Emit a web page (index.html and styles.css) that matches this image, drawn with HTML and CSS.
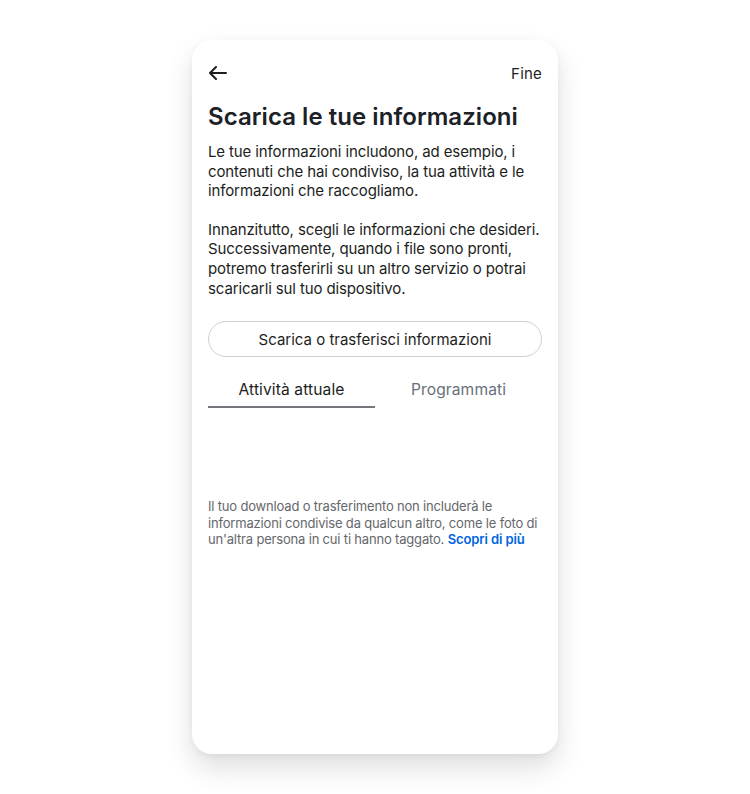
FILE: index.html
```html
<!DOCTYPE html>
<html lang="it">
<head>
    <meta charset="UTF-8">
    <meta name="viewport" content="width=device-width, initial-scale=1.0">
    <title>Scarica le tue informazioni</title>
    <link rel="stylesheet" href="styles.css">
</head>
<body>
    <div class="phone">
        <div class="topbar">
            <span class="back">
                <svg width="18" height="14" viewBox="0 0 18 14" fill="none" stroke="#1c1e21" stroke-width="2" stroke-linecap="round" stroke-linejoin="round">
                    <path d="M17 7H1.5M7 1L1 7l6 6"/>
                </svg>
            </span>
            <span class="done">Fine</span>
        </div>

        <div class="content">
            <h1>Scarica le tue informazioni</h1>
            <p>Le tue informazioni includono, ad esempio, i contenuti che hai condiviso, la tua attività e le informazioni che raccogliamo.</p>
            <p>Innanzitutto, scegli le informazioni che desideri. Successivamente, quando i file sono pronti, potremo trasferirli su un altro servizio o potrai scaricarli sul tuo dispositivo.</p>

            <button class="main-btn">Scarica o trasferisci informazioni</button>

            <div class="tabs">
                <div class="tab active">Attività attuale</div>
                <div class="tab">Programmati</div>
            </div>

            <p class="note">Il tuo download o trasferimento non includerà le informazioni condivise da qualcun altro, come le foto di un'altra persona in cui ti hanno taggato. <a href="#">Scopri di più</a></p>
        </div>
    </div>
</body>
</html>
```

FILE: styles.css
```css
* {
    margin: 0;
    padding: 0;
    box-sizing: border-box;
    font-family: Inter, 'Noto Sans', sans-serif;
}
html, body {
    min-height: 100%;
}
body {
    background-color: #fff;
    color: #1c1e21;
    display: flex;
    justify-content: center;
    padding: 40px 0;
}
.phone {
    width: 366px;
    height: 714px;
    background: #fff;
    border-radius: 20px;
    padding-top: 20px;
    box-shadow: 0 14px 28px rgba(0, 0, 0, 0.13), 0 2px 6px rgba(0, 0, 0, 0.05);
}
.topbar {
    display: flex;
    justify-content: space-between;
    align-items: center;
    height: 26px;
    padding: 0 16px 0 17px;
}
.back {
    display: flex;
}
.done {
    font-size: 15px;
    color: #1c1e21;
    letter-spacing: 0.2px;
}
.content {
    padding: 0 16px;
}
h1 {
    font-size: 24px;
    line-height: 28px;
    font-weight: 600;
    color: #1c2127;
    margin-top: 17px;
    letter-spacing: 0.05px;
}
p {
    font-size: 15px;
    line-height: 19.6px;
    margin-top: 11px;
    letter-spacing: -0.12px;
}
p + p {
    margin-top: 19px;
}
.main-btn {
    display: block;
    width: 100%;
    height: 36px;
    margin-top: 23px;
    border: 1px solid #ced0d4;
    border-radius: 18px;
    background: #fff;
    font-size: 15px;
    color: #1c1e21;
}
.tabs {
    display: flex;
    margin-top: 14px;
}
.tab {
    flex: 1;
    text-align: center;
    font-size: 15.6px;
    line-height: 20px;
    padding: 9px 0 6px;
    border-bottom: 2px solid transparent;
    color: #67707a;
    letter-spacing: 0.1px;
}
.tab.active {
    color: #1c1e21;
    border-bottom-color: #73767a;
}
.note {
    margin-top: 90px;
    font-size: 13px;
    line-height: 16.6px;
    color: #65676b;
    letter-spacing: -0.18px;
}
.note a {
    color: #0064e0;
    font-weight: 600;
    text-decoration: none;
    letter-spacing: -0.1px;
}
```
